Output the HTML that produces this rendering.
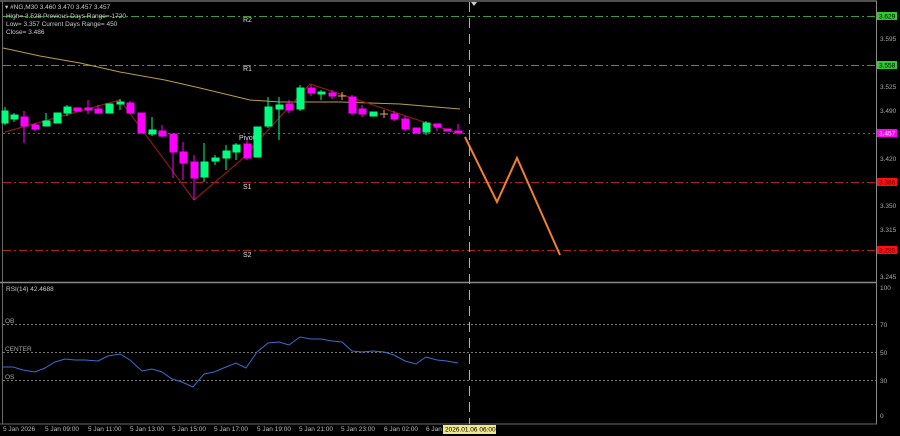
<!DOCTYPE html>
<html><head><meta charset="utf-8"><style>
html,body{margin:0;padding:0;background:#000;width:900px;height:436px;overflow:hidden}
svg{display:block}
text{font-family:"Liberation Sans",sans-serif}
</style></head><body>
<svg width="900" height="436" viewBox="0 0 900 436" xmlns="http://www.w3.org/2000/svg">
<rect width="900" height="436" fill="#000"/>
<!-- frame -->
<line x1="0" y1="1" x2="877" y2="1" stroke="#6a6a6a" stroke-width="1.5"/>
<line x1="2.5" y1="1" x2="2.5" y2="424" stroke="#6a6a6a"/>
<line x1="876.5" y1="1" x2="876.5" y2="424" stroke="#8a8a8a"/>
<line x1="0" y1="282.5" x2="877" y2="282.5" stroke="#8a8a8a" stroke-width="1.5"/>
<line x1="0" y1="424" x2="877" y2="424" stroke="#6a6a6a"/>
<!-- levels -->
<g stroke-width="1" stroke-dasharray="8,3,2,3">
<line x1="3" y1="16.5" x2="876" y2="16.5" stroke="#3c9c3c"/>
<line x1="3" y1="65.5" x2="876" y2="65.5" stroke="#3c9c3c"/>
<line x1="3" y1="182.5" x2="876" y2="182.5" stroke="#b02020"/>
<line x1="3" y1="250.5" x2="876" y2="250.5" stroke="#b02020"/>
</g>
<line x1="3" y1="133.5" x2="876" y2="133.5" stroke="#c020c0" stroke-dasharray="2,3"/>
<g font-size="7" fill="#ddd">
<text x="243" y="22">R2</text><text x="243" y="71">R1</text>
<text x="239" y="140">Pivot</text>
<text x="243" y="189">S1</text><text x="243" y="257">S2</text>
</g>
<!-- MA -->
<polyline fill="none" stroke="#b8a040" stroke-width="1" points="3,48 40,56 80,63 120,72 165,80 200,88 250,100 280,102 340,102 400,104 460,109"/>
<!-- zigzag -->
<polyline fill="none" stroke="#8b1a1a" stroke-width="1.2" points="5,132 120,100 194,200 240,161 310,84 460,134"/>
<!-- candles -->
<g stroke-width="1">
<g stroke="#00ff7f" fill="#00ff7f">
<line x1="5" y1="107" x2="5" y2="125"/><rect x="2" y="111" width="6" height="12"/>
<line x1="14" y1="113" x2="14" y2="122"/><rect x="11" y="115" width="7" height="4"/>
<line x1="46" y1="113" x2="46" y2="126"/><rect x="43" y="121" width="7" height="5"/>
<rect x="54" y="113" width="7" height="10"/>
<line x1="67" y1="105" x2="67" y2="116"/><rect x="64" y="107" width="7" height="6"/>
<rect x="106" y="104" width="7" height="9"/>
<line x1="120" y1="99" x2="120" y2="110"/><rect x="117" y="102" width="7" height="2"/>
<line x1="152" y1="117" x2="152" y2="136"/><rect x="149" y="130" width="7" height="4"/>
<line x1="204" y1="143" x2="204" y2="182"/><rect x="201" y="162" width="7" height="15"/>
<line x1="215" y1="155" x2="215" y2="165"/><rect x="212" y="158" width="7" height="3"/>
<line x1="226" y1="145" x2="226" y2="170"/><rect x="223" y="151" width="7" height="7"/>
<line x1="236" y1="143" x2="236" y2="160"/><rect x="233" y="145" width="7" height="7"/>
<rect x="254" y="127" width="7" height="30"/>
<line x1="268" y1="97" x2="268" y2="128"/><rect x="265" y="107" width="7" height="19"/>
<line x1="279" y1="97" x2="279" y2="140"/><rect x="276" y="105" width="7" height="4"/>
<line x1="300" y1="85" x2="300" y2="111"/><rect x="297" y="88" width="7" height="21"/>
<line x1="321" y1="90" x2="321" y2="100"/><rect x="318" y="92" width="7" height="2"/>
<rect x="370" y="112" width="7" height="4"/>
<line x1="426" y1="121" x2="426" y2="135"/><rect x="423" y="123" width="7" height="9"/>
</g>
<g stroke="#ff00ff" fill="#ff00ff">
<line x1="24" y1="111" x2="24" y2="143"/><rect x="21" y="117" width="7" height="9"/>
<line x1="35" y1="123" x2="35" y2="131"/><rect x="32" y="125" width="7" height="4"/>
<rect x="74" y="108" width="7" height="3"/>
<line x1="88" y1="100" x2="88" y2="114"/><rect x="85" y="108" width="7" height="2"/>
<line x1="98" y1="105" x2="98" y2="114"/><rect x="95" y="109" width="7" height="4"/>
<line x1="130" y1="101" x2="130" y2="114"/><rect x="127" y="103" width="7" height="10"/>
<rect x="138" y="113" width="7" height="20"/>
<line x1="162" y1="125" x2="162" y2="137"/><rect x="159" y="131" width="7" height="5"/>
<line x1="173" y1="134" x2="173" y2="178"/><rect x="170" y="134" width="7" height="18"/>
<line x1="183" y1="142" x2="183" y2="180"/><rect x="180" y="152" width="7" height="11"/>
<line x1="194" y1="155" x2="194" y2="200"/><rect x="191" y="162" width="7" height="16"/>
<line x1="247" y1="140" x2="247" y2="160"/><rect x="244" y="144" width="7" height="14"/>
<line x1="289" y1="100" x2="289" y2="113"/><rect x="286" y="104" width="7" height="6"/>
<line x1="311" y1="85" x2="311" y2="96"/><rect x="308" y="88" width="7" height="5"/>
<line x1="332" y1="90" x2="332" y2="99"/><rect x="329" y="93" width="7" height="3"/>
<line x1="352" y1="95" x2="352" y2="115"/><rect x="349" y="97" width="7" height="16"/>
<line x1="362" y1="105" x2="362" y2="117"/><rect x="359" y="109" width="7" height="5"/>
<line x1="394" y1="111" x2="394" y2="121"/><rect x="391" y="114" width="7" height="5"/>
<line x1="405" y1="116" x2="405" y2="131"/><rect x="402" y="119" width="7" height="10"/>
<rect x="413" y="128" width="7" height="5"/>
<line x1="437" y1="124" x2="437" y2="131"/><rect x="434" y="124" width="7" height="3"/>
<rect x="444" y="129" width="7" height="2"/>
<line x1="458" y1="124" x2="458" y2="133"/><rect x="455" y="131" width="7" height="2"/>
</g>
<g stroke="#e0b040">
<line x1="342" y1="92" x2="342" y2="100"/><line x1="338" y1="96" x2="346" y2="96"/>
<line x1="384" y1="110" x2="384" y2="118"/><line x1="380" y1="114" x2="388" y2="114"/>
</g>
</g>
<!-- projection -->
<polyline fill="none" stroke="#f08030" stroke-width="2" points="465,137 497,202 517,158 560,255"/>
<!-- vertical cursor line -->
<line x1="469.5" y1="2" x2="469.5" y2="424" stroke="#b0b0a0" stroke-width="1" stroke-dasharray="10,6"/>
<polygon points="471,2 477,2 474,6" fill="#ccc"/>
<!-- price axis -->
<g font-size="6.5" fill="#aaa">
<text x="880" y="41">3.595</text><text x="880" y="89">3.525</text><text x="880" y="113">3.490</text>
<text x="880" y="161">3.420</text><text x="880" y="208">3.350</text><text x="880" y="232">3.315</text>
<text x="880" y="279">3.245</text>
<text x="880" y="290">100</text><text x="880" y="327">70</text><text x="880" y="355">50</text>
<text x="880" y="383">30</text><text x="880" y="418">0</text>
</g>
<rect x="877" y="12" width="20" height="8" fill="#2ecc2e"/><text x="879" y="18.5" font-size="6.5" fill="#000">3.629</text>
<rect x="877" y="61" width="20" height="8" fill="#2ecc2e"/><text x="879" y="67.5" font-size="6.5" fill="#000">3.558</text>
<rect x="877" y="129" width="20" height="8" fill="#ff00ff"/><text x="879" y="135.5" font-size="6.5" fill="#fff">3.457</text>
<rect x="877" y="178" width="20" height="8" fill="#ff1010"/><text x="879" y="184.5" font-size="6.5" fill="#600">3.386</text>
<rect x="877" y="246" width="20" height="8" fill="#ff1010"/><text x="879" y="252.5" font-size="6.5" fill="#600">3.285</text>
<!-- header text -->
<g font-size="6.5" fill="#ccc">
<text x="5" y="9">▾  #NG,M30  3.460 3.470 3.457 3.457</text>
<text x="6" y="18">High= 3.528   Previous Days Range= 1720</text>
<text x="6" y="26">Low= 3.357   Current Days Range= 450</text>
<text x="6" y="34">Close= 3.486</text>
</g>
<!-- RSI -->
<text x="6" y="291" font-size="6.5" fill="#ccc">RSI(14) 42.4688</text>
<g stroke="#777" stroke-dasharray="2,2">
<line x1="3" y1="324.5" x2="876" y2="324.5"/>
<line x1="3" y1="352.5" x2="876" y2="352.5"/>
<line x1="3" y1="380.5" x2="876" y2="380.5"/>
</g>
<g font-size="6.5" fill="#aaa"><text x="5" y="323">OB</text><text x="5" y="351">CENTER</text><text x="5" y="379">OS</text></g>
<polyline fill="none" stroke="#3a6ed0" stroke-width="1" points="3,367 13,367 23,370 35,372 45,368 55,362 65,359 75,360 85,360 98,361 108,356 120,354 130,360 142,371 152,369 162,372 172,379 182,382 193,387 204,374 214,372 226,367 236,363 246,368 257,352 268,343 279,342 289,345 300,337 311,339 321,339 332,341 342,342 352,351 362,352 373,351 384,352 394,355 405,361 416,364 426,357 437,360 447,361 458,363"/>
<!-- time axis -->
<g font-size="6.5" fill="#bbb">
<text x="3" y="431">5 Jan 2026</text><text x="45" y="431">5 Jan 09:00</text><text x="88" y="431">5 Jan 11:00</text>
<text x="130" y="431">5 Jan 13:00</text><text x="172" y="431">5 Jan 15:00</text><text x="214" y="431">5 Jan 17:00</text>
<text x="257" y="431">5 Jan 19:00</text><text x="299" y="431">5 Jan 21:00</text><text x="341" y="431">5 Jan 23:00</text>
<text x="384" y="431">6 Jan 02:00</text><text x="426" y="431">6 Jan</text>
</g>
<rect x="443" y="425" width="53" height="9" fill="#f0e68c"/>
<text x="445" y="431.5" font-size="6.5" fill="#000">2026.01.06 06:00</text>
</svg>
</body></html>
